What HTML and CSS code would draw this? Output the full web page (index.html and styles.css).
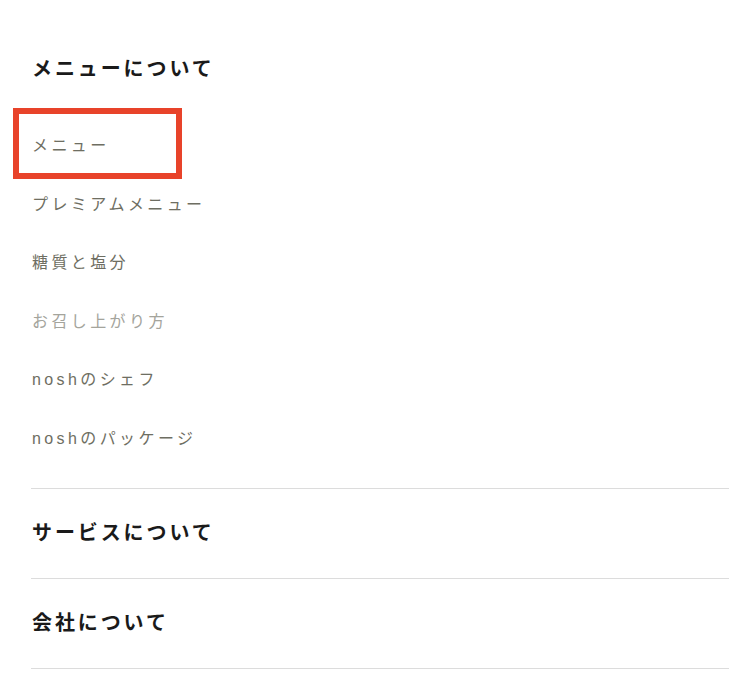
FILE: index.html
```html
<!DOCTYPE html>
<html lang="ja">
<head>
  <meta charset="UTF-8">
  <meta name="viewport" content="width=device-width, initial-scale=1.0">
  <title>メニューについて</title>
<link rel="stylesheet" href="styles.css">
</head>
<body>
  <nav class="footer-nav">
    <!-- Open section -->
    <section class="nav-section open">
      <h3 class="nav-title">メニューについて</h3>
      <ul class="nav-list">
        <li class="nav-item current">
          <a href="#">メニュー</a>
          <span class="highlight"></span>
        </li>
        <li class="nav-item"><a href="#">プレミアムメニュー</a></li>
        <li class="nav-item"><a href="#">糖質と塩分</a></li>
        <li class="nav-item muted"><a href="#">お召し上がり方</a></li>
        <li class="nav-item"><a href="#">noshのシェフ</a></li>
        <li class="nav-item"><a href="#">noshのパッケージ</a></li>
      </ul>
    </section>
    <section class="nav-section">
      <h3 class="nav-title">サービスについて</h3>
    </section>
    <section class="nav-section">
      <h3 class="nav-title">会社について</h3>
    </section>
  </nav>
</body>
</html>
```

FILE: styles.css
```css
body {
  margin: 0;
  background: #ffffff;
  font-family: "Liberation Sans", "Noto Sans CJK JP", sans-serif;
  color: #1a1a1a;
}

.footer-nav {
  padding: 25px 0 0 31px;
}

.nav-section {
  border-bottom: 1px solid #dcdcdc;
}

.nav-title {
  margin: 0;
  padding: 29px 0 29px 1px;
  font-size: 20px;
  line-height: 31px;
  font-weight: bold;
  letter-spacing: 2.9px;
}

.nav-list {
  list-style: none;
  margin: 0;
  padding: 3px 0 19.4px 1px;
}

.nav-item {
  position: relative;
  height: 58.6px;
  line-height: 58.6px;
  font-size: 16px;
  letter-spacing: 3.4px;
}

.nav-item a {
  color: #6e6e62;
  text-decoration: none;
}

.nav-item.muted a {
  color: #a4a49c;
}

/* red box marking the current item */
.highlight {
  position: absolute;
  left: -19px;
  top: -9px;
  width: 157px;
  height: 59px;
  border: 6px solid #e8432a;
  pointer-events: none;
}
```
